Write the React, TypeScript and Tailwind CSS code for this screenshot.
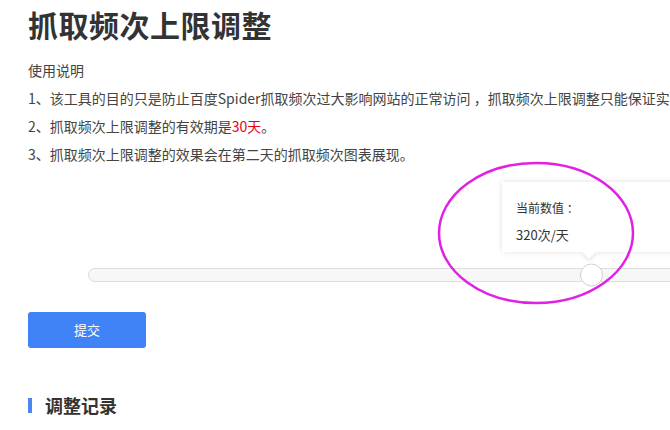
const font = { fontFamily: '"Noto Sans CJK SC", "Noto Sans", sans-serif' }

const notes = [
  '1、该工具的目的只是防止百度Spider抓取频次过大影响网站的正常访问 ，抓取频次上限调整只能保证实际抓取频次不超过上限值。',
]

export default function App() {
  return (
    <div className="relative w-[670px] h-[430px] overflow-hidden bg-white text-[#333]" style={font}>
      <div className="pl-[28px]">
        {/* Title */}
        <h1 className="mt-[4px] text-[30px] leading-[40px] font-bold text-[#333] tracking-[0.5px]">抓取频次上限调整</h1>

        {/* Usage notes */}
        <div className="mt-[12px] text-[14px] leading-[28px] text-[#444]">
          <p>使用说明</p>
          {notes.map(n => (
            <p key={n} className="whitespace-nowrap">{n}</p>
          ))}
          <p className="whitespace-nowrap">
            2、抓取频次上限调整的有效期是<span className="text-[#e60012]">30天</span>。
          </p>
          <p className="whitespace-nowrap">3、抓取频次上限调整的效果会在第二天的抓取频次图表展现。</p>
        </div>

        {/* Slider */}
        <div className="relative pt-[100px] pl-[60px]">
          <div className="relative w-[640px] h-[14px] rounded-full bg-[#f7f7f7] border border-[#dcdcdc]">
            <div className="absolute left-[491px] top-1/2 -translate-y-1/2 w-[23px] h-[23px] rounded-full bg-white border border-[#d0d0d0]" />
          </div>
          <div className="absolute left-[474px] top-[14px] w-[220px] h-[70px] bg-white shadow-[0_0_6px_rgba(0,0,0,0.12)] pl-[14px] pt-[12px] text-[12px] leading-[27px] text-[#333]">
            <p>当前数值 ：</p>
            <p className="text-[13px]">320次/天</p>
            <div className="absolute left-[82px] -bottom-[5px] w-[10px] h-[10px] rotate-45 bg-white shadow-[2px_2px_3px_rgba(0,0,0,0.08)]" />
          </div>
        </div>

        {/* Submit */}
        <button className="mt-[30px] w-[118px] h-[36px] rounded-[3px] bg-[#3f83f6] text-white text-[13px]">提交</button>

        {/* Records heading */}
        <div className="mt-[45px] flex items-center">
          <span className="w-[4px] h-[15px] bg-[#4a88f0]" />
          <h2 className="ml-[13px] text-[18px] leading-[24px] font-bold text-[#333]">调整记录</h2>
        </div>
      </div>

      {/* Annotation ellipse */}
      <svg className="absolute left-0 top-0 pointer-events-none" width="670" height="430">
        <ellipse cx="536" cy="233" rx="97" ry="70" fill="none" stroke="#e020e4" strokeWidth="2.5" />
      </svg>
    </div>
  )
}
